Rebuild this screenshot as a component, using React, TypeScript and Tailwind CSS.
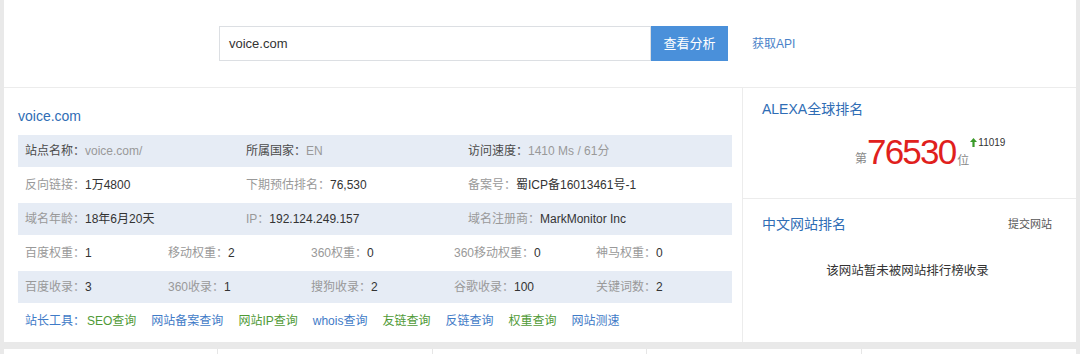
import React from 'react';

const font = 'font-["Helvetica_Neue","Liberation_Sans","Noto_Sans_CJK_SC",sans-serif]';

type Cell = { label: string; value: string };

const rowsTop: Cell[][] = [
  [
    { label: '站点名称：', value: 'voice.com/' },
    { label: '所属国家：', value: 'EN' },
    { label: '访问速度：', value: '1410 Ms / 61分' },
  ],
  [
    { label: '反向链接：', value: '1万4800' },
    { label: '下期预估排名：', value: '76,530' },
    { label: '备案号：', value: '蜀ICP备16013461号-1' },
  ],
  [
    { label: '域名年龄：', value: '18年6月20天' },
    { label: 'IP：', value: '192.124.249.157' },
    { label: '域名注册商：', value: 'MarkMonitor Inc' },
  ],
];

const rowsBottom: Cell[][] = [
  [
    { label: '百度权重：', value: '1' },
    { label: '移动权重：', value: '2' },
    { label: '360权重：', value: '0' },
    { label: '360移动权重：', value: '0' },
    { label: '神马权重：', value: '0' },
  ],
  [
    { label: '百度收录：', value: '3' },
    { label: '360收录：', value: '1' },
    { label: '搜狗收录：', value: '2' },
    { label: '谷歌收录：', value: '100' },
    { label: '关键词数：', value: '2' },
  ],
];

const tools = [
  { t: 'SEO查询', g: true },
  { t: '网站备案查询', g: false },
  { t: '网站IP查询', g: true },
  { t: 'whois查询', g: false },
  { t: '友链查询', g: true },
  { t: '反链查询', g: false },
  { t: '权重查询', g: true },
  { t: '网站测速', g: false },
];

export default function App() {
  return (
    <div className={`w-[1080px] h-[354px] overflow-hidden bg-[#e9e9e9] px-[4px] ${font}`}>
      {/* search bar */}
      <div className="h-[88px] bg-white border-b border-[#ececec] flex items-center pl-[215px]">
        <div className="w-[432px] h-[35px] border border-[#dcdfe3] flex items-center px-[9px] text-[13px] text-[#333]">
          voice.com
        </div>
        <button className="w-[77px] h-[35px] bg-[#4a90da] text-white text-[13px]">查看分析</button>
        <a className="ml-[24px] text-[12px] text-[#4a82c8]">获取API</a>
      </div>

      {/* main */}
      <div className="flex h-[254px] bg-white">
        <div className="w-[739px] border-r border-[#ececec] pl-[14px] pr-[10px] pt-[18px]">
          <div className="text-[14px] text-[#2f6db5] leading-[20px] mb-[9px]">voice.com</div>
          <div className="text-[12px]">
            {rowsTop.map((row, i) => (
              <div
                key={i}
                className={`grid grid-cols-[221px_222px_1fr] items-center px-[7px] ${
                  i % 2 === 0 ? 'h-[32px] bg-[#e6ecf5]' : 'h-[36px] bg-white'
                }`}
              >
                {row.map((c, j) => (
                  <div key={j} className="whitespace-nowrap">
                    <span className={i === 0 ? 'text-[#4a4a4a]' : 'text-[#999]'}>{c.label}</span>
                    <span className={i === 0 ? 'text-[#999]' : 'text-[#333]'}>{c.value}</span>
                  </div>
                ))}
              </div>
            ))}
            {rowsBottom.map((row, i) => (
              <div
                key={i}
                className={`grid grid-cols-[143px_143px_143px_142px_1fr] items-center px-[7px] ${
                  i % 2 === 1 ? 'h-[32px] bg-[#e6ecf5]' : 'h-[36px] bg-white'
                }`}
              >
                {row.map((c, j) => (
                  <div key={j} className="whitespace-nowrap">
                    <span className="text-[#999]">{c.label}</span>
                    <span className="text-[#333]">{c.value}</span>
                  </div>
                ))}
              </div>
            ))}
            <div className="h-[36px] flex items-center gap-[15px] px-[7px]">
              <span className="text-[#3f7bc7] -mr-[13px]">站长工具：</span>
              {tools.map((x) => (
                <a key={x.t} className={x.g ? 'text-[#4f9a36]' : 'text-[#3f7bc7]'}>
                  {x.t}
                </a>
              ))}
            </div>
          </div>
        </div>

        <div className="flex-1 flex flex-col">
          <div className="h-[111px] border-b border-[#ececec] px-[19px] pt-[11px]">
            <div className="text-[14px] text-[#2f6db5] leading-[20px]">ALEXA全球排名</div>
            <div className="flex items-end mt-[14px] pl-[93px]">
              <span className="text-[12px] text-[#888] mb-[3px]">第</span>
              <span className="text-[35px] leading-[38px] tracking-[-1.8px] text-[#e0201c]">76530</span>
              <span className="text-[12px] text-[#888] ml-[2px] mb-[1px]">位</span>
              <span className="self-start flex items-center text-[10px] text-[#333] ml-[1px] mt-[2px]">
                <svg width="7" height="9" viewBox="0 0 7 9">
                  <path d="M3.5 0 L7 4 H4.6 V9 H2.4 V4 H0 Z" fill="#3b9a2a" />
                </svg>
                <span className="ml-[1px]">11019</span>
              </span>
            </div>
          </div>
          <div className="flex-1 px-[19px] pt-[15px]">
            <div className="flex items-center justify-between">
              <span className="text-[14px] text-[#2f6db5] leading-[20px]">中文网站排名</span>
              <span className="text-[11px] text-[#555] mr-[5px]">提交网站</span>
            </div>
            <div className="text-center text-[12.5px] text-[#333] mt-[28px] pr-[4px]">该网站暂未被网站排行榜收录</div>
          </div>
        </div>
      </div>

      {/* bottom strip */}
      <div className="mt-[7px] h-[10px] grid grid-cols-5 bg-white">
        <div className="border-r border-[#e6e6e6]" />
        <div className="border-r border-[#e6e6e6]" />
        <div className="border-r border-[#e6e6e6]" />
        <div className="border-r border-[#e6e6e6]" />
        <div />
      </div>
    </div>
  );
}
